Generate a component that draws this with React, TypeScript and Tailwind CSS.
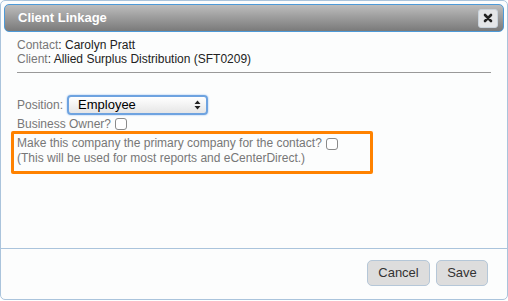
import { useState } from "react";

const CheckBox = () => (
  <span className="inline-block w-[12px] h-[12px] rounded-[3px] border border-[#8a8a8a] bg-white align-middle" />
);

export default function App() {
  const [position] = useState("Employee");
  return (
    <div className="w-[508px] h-[301px] bg-white font-['Liberation_Sans',Arial,sans-serif] text-[12px]">
      <div className="w-[508px] h-[300px] flex flex-col rounded-[5px] border border-[#aac4dc] bg-[#fcfdfd] p-[3px]">
        {/* title bar */}
        <div className="h-[28px] flex items-center justify-between rounded-[5px] border border-[#4d9ad8] bg-gradient-to-b from-[#bdbdbd] to-[#7a7a7a] pl-[13px] pr-[5px]">
          <span className="text-white font-bold text-[13px]">Client Linkage</span>
          <button className="w-[20px] h-[19px] rounded-[3px] border border-[#c9d3dc] bg-[#e4e6e8] flex items-center justify-center">
            <svg width="10" height="10" viewBox="0 0 10 10">
              <path d="M2 2L8 8M8 2L2 8" stroke="#222" strokeWidth="2.6" strokeLinecap="round" />
            </svg>
          </button>
        </div>

        <div className="flex-1 flex flex-col px-[9px] pt-[6px]">
          <div className="pl-[4px] text-[#222] leading-[14px]">
            <div>
              <span className="text-[#777]">Contact</span>: Carolyn Pratt
            </div>
            <div>
              <span className="text-[#777]">Client</span>: Allied Surplus Distribution (SFT0209)
            </div>
          </div>
          <div className="mt-[6px] ml-[4px] mr-[4px] h-[1px] bg-[#999]" />

          <div className="mt-[22px] pl-[4px] flex items-center gap-[4px] text-[#777]">
            <span>Position:</span>
            <div className="w-[141px] h-[20px] rounded-[4px] border-[2px] border-[#6ea3e0] shadow-[0_0_2px_#8ab8ee] bg-gradient-to-b from-white to-[#e6e6e6] flex items-center justify-between pl-[9px] pr-[5px] text-[13px] text-black">
              <span>{position}</span>
              <svg width="7" height="10" viewBox="0 0 7 10">
                <path d="M3.5 0.5L6.5 4H0.5Z M3.5 9.5L0.5 6H6.5Z" fill="#222" />
              </svg>
            </div>
          </div>

          <div className="mt-[2px] pl-[4px] flex items-center gap-[4px] text-[#777] leading-[14px]">
            <span>Business Owner?</span>
            <CheckBox />
          </div>

          <div className="-ml-[2px] w-[362px] h-[43px] border-[3px] border-[#ff8200] rounded-[2px] px-[3px] pt-[2px] text-[#777] leading-[15px]">
            <div className="flex items-center gap-[4px]">
              <span>Make this company the primary company for the contact?</span>
              <CheckBox />
            </div>
            <div>(This will be used for most reports and eCenterDirect.)</div>
          </div>

          <div className="flex-1" />
        </div>

        <div className="h-[1px] bg-[#aac4dc] -mx-[3px]" />
        <div className="h-[47px] flex items-center justify-end gap-[6px] pr-[16px]">
          <button className="w-[63px] h-[26px] rounded-[5px] border border-[#b5c7d8] bg-[#dddddd] text-[#333] text-[13px]">
            Cancel
          </button>
          <button className="w-[52px] h-[26px] rounded-[5px] border border-[#b5c7d8] bg-[#dddddd] text-[#333] text-[13px]">
            Save
          </button>
        </div>
      </div>
    </div>
  );
}
